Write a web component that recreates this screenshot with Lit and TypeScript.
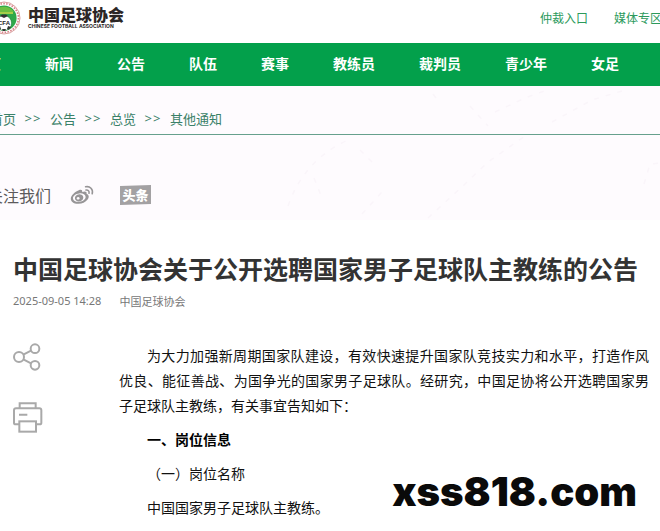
import { LitElement, html, css } from "lit";
import { customElement } from "lit/decorators.js";

const NAV = ["首页", "新闻", "公告", "队伍", "赛事", "教练员", "裁判员", "青少年", "女足"];
const CRUMBS = ["首页", "公告", "总览", "其他通知"];

@customElement("site-header")
class SiteHeader extends LitElement {
  static styles = css`
    :host { display: block; }
    a { color: inherit; text-decoration: none; white-space: nowrap; }
    .top { display: flex; justify-content: space-between; height: 43px; overflow: hidden; background: #fff; }
    .brand { display: flex; gap: 7px; margin-left: -13px; color: #2b2625; }
    .crest { width: 34px; height: 34px; margin-top: 1px; }
    .names { display: flex; flex-direction: column; padding-top: 6px; }
    .zh { font-size: 16px; line-height: 17px; font-weight: 900; }
    .en { font: bold 5px/6px Inter, sans-serif; }
    .links { display: flex; gap: 26px; margin-right: -2px; padding-top: 9px; font-size: 12px; line-height: 18px; color: #2c9a5c; }
    .nav { display: flex; gap: 44px; height: 43px; line-height: 41px; background: #03a04b; color: #fff; font-size: 14px; font-weight: 700; overflow: hidden; }
    .nav a:first-child { margin-left: -27px; }
  `;
  render() {
    return html`
      <header class="top">
        <a class="brand" href="#">
          <svg class="crest" viewBox="0 0 34 34" aria-hidden="true">
            <circle cx="17" cy="17" r="16" fill="#fff" stroke="#d9a0a0" stroke-width="1" />
            <circle cx="17" cy="17" r="14.4" fill="none" stroke="#d88388" stroke-width="1.6" stroke-dasharray="1.6 1.3" />
            <circle cx="17" cy="17" r="12.6" fill="#2fa84a" />
            <path d="M7 11 A12 12 0 0 1 27 11 Z" fill="#6cbf42" />
            <path d="M8 12 H26" stroke="#d8e04a" stroke-width="1.4" />
            <circle cx="17" cy="22" r="7.6" fill="#fff" stroke="#1d7d3a" stroke-width="0.6" />
            <path d="M13 15 l4 2 4 -2 -2 -1.6 h-4 Z M10 26 l3 -1 1 3 -2 0.8 Z M24 26 l-3 -1 -1 3 2 0.8 Z M15 28 h4 l-1 2 h-2 Z" fill="#333" />
            <text x="17" y="24" text-anchor="middle" font-family="Liberation Sans" font-weight="bold" font-size="6" fill="#222">CFA</text>
          </svg>
          <span class="names"><span class="zh">中国足球协会</span><span class="en">CHINESE FOOTBALL ASSOCIATION</span></span>
        </a>
        <div class="links"><a href="#">仲裁入口</a><a href="#">媒体专区</a></div>
      </header>
      <nav class="nav">${NAV.map((n) => html`<a href="#">${n}</a>`)}</nav>
    `;
  }
}

@customElement("page-banner")
class PageBanner extends LitElement {
  static styles = css`
    :host { display: block; position: relative; background: #fefbfe; overflow: hidden; }
    a { color: inherit; text-decoration: none; }
    .decor { position: absolute; top: 0; right: 0; width: 440px; height: 134px; }
    .crumbs { position: relative; display: flex; margin: 0; padding: 0 0 0 10px; height: 48px; line-height: 65px; list-style: none; font-size: 13px; color: #3a8168; border-bottom: 1px solid #66a08d; white-space: nowrap; }
    .crumbs li { display: flex; }
    .crumbs li:first-child { margin-left: -20px; }
    .crumbs li + li::before { content: ">>"; width: 34px; text-align: center; font-family: "Noto Sans", sans-serif; letter-spacing: 1px; }
    .follow { position: relative; display: flex; align-items: center; height: 32px; padding: 44px 0 9px; margin-left: -13px; font-size: 16px; color: #5c5a5c; }
    .weibo { display: flex; margin-left: 19px; }
    .weibo svg { width: 24px; height: 20px; }
    .toutiao { margin-left: 26px; width: 31px; height: 20px; line-height: 19px; text-align: center; font-size: 13px; font-weight: 900; color: #fff; background: #a3a1a3; clip-path: polygon(0 5%, 100% 0, 100% 95%, 0 100%); }
  `;
  render() {
    return html`
      <svg class="decor" viewBox="0 0 440 134" fill="none" stroke="#faf5fa" stroke-width="1.5" stroke-dasharray="5 7" aria-hidden="true">
        <path d="M213 8 l6 8 M250 20 l18 20 M275 26 l30 -14 22 -8 M332 36 L372 14 L405 4" />
        <path d="M208 132 L245 98 L268 76 L305 50 M68 120 Q84 74 128 54 M140 64 l14 14 M94 92 l8 20 M142 128 l20 -22 M424 98 l6 -20 10 -1" />
      </svg>
      <ol class="crumbs">${CRUMBS.map((c) => html`<li><a href="#">${c}</a></li>`)}</ol>
      <div class="follow">
        <span>关注我们</span>
        <a class="weibo" href="#" aria-label="微博">
          <svg viewBox="0 0 24 20">
            <path fill="#979597" fill-rule="evenodd" d="M8.8 5.2 C11 4.2 12.6 4.8 12.2 7 C15 6 17.2 6.4 16.6 9 C19 9.6 19.4 12.2 17.6 14.6 C15.4 17.6 11.6 19 8 18.8 C3.6 18.6 0.6 16.4 0.8 13.4 C1 10.6 4.6 6.8 8.8 5.2 Z M9.2 8.4 C5.6 8.8 2.8 10.8 3 13.4 C3.2 15.8 6 17.2 9.4 16.8 C13 16.4 15.8 14.2 15.6 11.8 C15.4 9.4 12.6 8 9.2 8.4 Z" />
            <path fill="#979597" fill-rule="evenodd" d="M9.4 9.2 a4.2 3.6 -15 1 0 0.1 0 Z M8.2 12 a1.5 1.3 0 1 1 -0.1 0 Z" />
            <path fill="none" stroke="#979597" stroke-width="1.6" stroke-linecap="round" d="M15.6 1.8 C20 0.8 23.4 4.4 22.2 8.8 M16 5 C18 4.6 19.6 6.2 19 8.2" />
          </svg>
        </a>
        <a class="toutiao" href="#">头条</a>
      </div>
    `;
  }
}

@customElement("news-article")
class NewsArticle extends LitElement {
  static styles = css`
    :host { display: block; padding: 33px 11px 11px 13px; background: #fff; }
    h1 { margin: 0; font-size: 25px; line-height: 30px; font-weight: 700; color: #333; white-space: nowrap; }
    .meta { display: flex; gap: 18px; margin-top: 10px; font-size: 11px; line-height: 16px; color: #777; }
    .meta time { font-family: "Noto Sans", sans-serif; }
    .body { display: grid; grid-template-columns: 30px 1fr; column-gap: 76px; margin-top: 34px; }
    .tools { display: flex; flex-direction: column; gap: 31px; }
    button { display: block; padding: 0; border: 0; background: none; color: #a9a9a9; cursor: pointer; text-align: left; }
    button svg { display: block; fill: none; stroke: currentColor; stroke-width: 6; }
    .share { width: 28px; height: 28px; }
    .print { width: 30px; height: 31px; }
    .text { display: flex; flex-direction: column; gap: 9px; font-size: 14px; line-height: 25px; color: #111; }
    p, h2 { margin: 0; text-indent: 2em; text-align: justify; font-size: 14px; }
    h2 { font-weight: 700; color: #000; }
  `;
  render() {
    return html`
      <article>
        <h1>中国足球协会关于公开选聘国家男子足球队主教练的公告</h1>
        <div class="meta"><time>2025-09-05 14:28</time><span>中国足球协会</span></div>
        <div class="body">
          <div class="tools">
            <button type="button" aria-label="分享">
              <svg class="share" viewBox="39 309 84 84">
                <circle cx="57" cy="351" r="15" /><circle cx="105" cy="326" r="13" /><circle cx="105" cy="376" r="13" />
                <path d="M70 344 L93 332 M70 358 L93 370" />
              </svg>
            </button>
            <button type="button" aria-label="打印">
              <svg class="print" viewBox="39 486 90 93">
                <path d="M59 505 V490 H107 V505 M57 553 H47 Q42 553 42 548 V511 Q42 505 48 505 H118 Q124 505 124 511 V548 Q124 553 119 553 H109 M57 524 H82" />
                <rect x="58" y="544" width="50" height="31" />
              </svg>
            </button>
          </div>
          <div class="text">
            <p>为大力加强新周期国家队建设，有效快速提升国家队竞技实力和水平，打造作风优良、能征善战、为国争光的国家男子足球队。经研究，中国足协将公开选聘国家男子足球队主教练，有关事宜告知如下：</p>
            <h2>一、岗位信息</h2>
            <p>（一）岗位名称</p>
            <p>中国国家男子足球队主教练。</p>
          </div>
        </div>
      </article>
    `;
  }
}

@customElement("app-root")
class AppRoot extends LitElement {
  static styles = css`
    :host { display: block; position: relative; overflow: hidden; background: #fff; font-family: "Noto Sans CJK SC", sans-serif; }
    .mark { position: absolute; right: 23px; bottom: 15px; font: 900 40px/48px Inter, sans-serif; color: #0a0a0a; }
  `;
  render() {
    return html`
      <site-header></site-header>
      <page-banner></page-banner>
      <news-article></news-article>
      <div class="mark">xss818.com</div>
    `;
  }
}
